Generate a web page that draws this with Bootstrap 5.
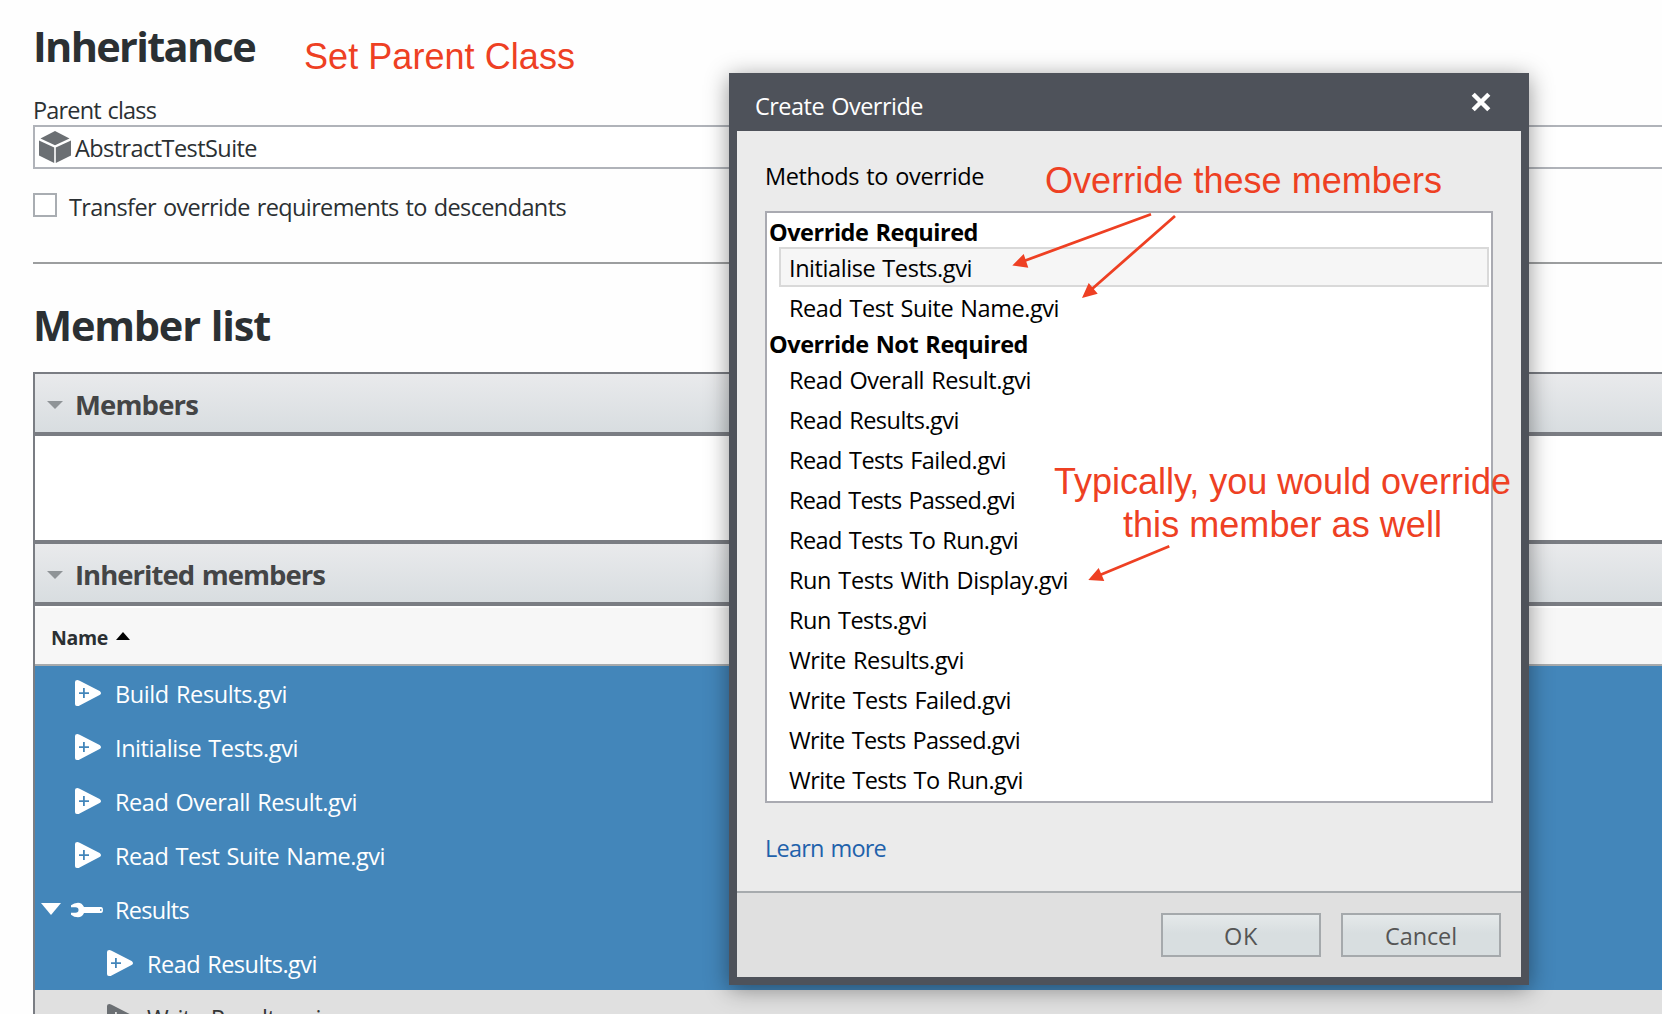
<!DOCTYPE html>
<html lang="en">
<head>
<meta charset="utf-8">
<title>Create Override</title>
<link href="https://cdn.jsdelivr.net/npm/bootstrap@5.3.0/dist/css/bootstrap.min.css" rel="stylesheet">
<style>
body{font-family:"Open Sans","Noto Sans",sans-serif;font-size:23.5px;line-height:1.3;color:#2b3033;background:#fefefe;height:1014px;overflow:hidden;white-space:nowrap;word-spacing:1.5px}
svg{display:block;flex:none}
.page-pane{padding:21px 0 0 33px;height:1014px;overflow:hidden}
.page-title{font-size:41.5px;line-height:50px;font-weight:700;color:#2b3033;margin:0}
.field-label{line-height:34px;height:32px;margin-top:22px}
.class-field{height:44px;border:2px solid #b0b3b9;border-right:0;background:#fff;padding:3px 0 0 4px}
.class-field svg{margin-top:-3px}
.class-name{margin-left:4px}
.transfer-row{height:24px;margin-top:24px}
.tick-box{width:24px;height:24px;border:2px solid #a9adb2;background:#fff;margin-right:12px}
.divider{height:2px;background:#9c9e9f;margin-top:45px}
.list-title{margin-top:36px}
.member-table{border-left:2px solid #7a7d83;border-top:2px solid #7a7d83;margin-top:22px;background:#fff}
.section-head{height:62px;border-bottom:4px solid #7a7d83;background:linear-gradient(#e9eaec,#d8dde0);font-size:27.5px;font-weight:700;color:#444546;padding:4px 0 0 12px}
.section-head svg{margin:0 12px 0 0}
.section-blank{height:108px;border-bottom:4px solid #7a7d83}
.name-head{height:60px;border-top:2px solid #fff;border-bottom:2px solid #a7aaac;background:#f7f7f7;font-size:19.5px;font-weight:700;padding:4px 0 0 16px}
.name-head svg{margin:-4px 0 0 8px}
.tree-item{height:54px;background:#4386ba;color:#fff;padding:3px 0 0 40px}
.tree-item svg{margin-top:-4px}
.tree-item .lbl{margin-left:14px}
.tree-parent{padding-left:6px}
.tree-parent .wrench{margin:-1px 0 0 10px}
.tree-parent .lbl{margin-left:12px}
.tree-child{padding-left:72px}
.tree-plain{background:#e0e0e0;color:#333637}
.dlg{left:729px;top:73px;width:800px;height:912px;background:#ebebeb;border:8px solid #4e525a;border-top:0;box-shadow:0 4px 22px rgba(0,0,0,.42);color:#000}
.dlg-title{height:58px;background:#4e525a;color:#fff;padding:8px 30px 0 18px}
.dlg-title svg{margin-top:-9px}
.dlg-main{height:760px;padding:29px 28px 0}
.dlg-main .intro{line-height:33px;height:32px}
.method-list{height:592px;margin-top:19px;border:2px solid #a9aab1;background:#fff;padding:2px 2px 0}
.group-name{height:32px;line-height:32px;padding-top:1px;font-weight:700}
.method{height:40px;line-height:40px;padding:1px 0 0 10px;margin-left:10px}
.method.sel{border:2px solid #d9d9d9;background:#f6f6f6;line-height:37px;padding:1px 0 0 8px}
.learn{display:inline-block;line-height:32px;margin-top:29px;color:#1f62ab;text-decoration:none}
.dlg-foot{height:86px;border-top:2px solid #a7abae;background:#e0e0e0;padding:0 20px 0 0;gap:20px}
.dlg-btn{width:160px;height:44px;border:2px solid #a5a9ac;border-radius:0;background:linear-gradient(#e5e9ea,#d8dee0 45%,#d8dee0);color:#555;font-size:23.5px;line-height:40px;padding:1px 0 0}
.note{font-family:"Liberation Sans",Arial,sans-serif;font-size:36px;line-height:43px;color:#ee4023;text-align:center;word-spacing:0}
.note-parent{left:304px;top:35px}
.note-these{left:1045px;top:159px}
.note-typical{left:1054px;top:460px}
.arrows{left:0;top:0;pointer-events:none}
</style>
</head>
<body>
<svg width="0" height="0" class="position-absolute">
  <symbol id="vi" viewBox="0 0 26 26"><path fill="currentColor" fill-rule="evenodd" d="M0 2Q0 0 2.4 0Q3.2 0 4.6.8L24.6 11Q26 12 26 13.2Q26 14.2 24.6 15L4.6 25.4Q3 26.300 1.800 26Q0 26 0 24ZM8 8v4.200H4v1.700h4v4.200h1.800v-4.200h4.200v-1.700H9.800V8Z"/></symbol>
</svg>
<main class="page-pane">
  <h1 class="page-title"><span data-w="222">Inheritance</span></h1>
  <div class="field-label"><span data-w="123">Parent class</span></div>
  <div class="class-field d-flex align-items-center">
    <svg width="32" height="32" viewBox="0 0 32 32" fill="#6b6f73"><path d="M16 0 30.500 7.500 16 14.300 1.500 7.500Z"/><path d="M0 9.500 15.200 16.500V32L0 24.500Z"/><path d="M32 9.500 16.800 16.500V32L32 24.500Z"/></svg>
    <span class="class-name" data-w="182">AbstractTestSuite</span>
  </div>
  <div class="transfer-row d-flex align-items-center"><span class="tick-box"></span><span data-w="497" class="pt-1">Transfer override requirements to descendants</span></div>
  <div class="divider"></div>
  <h1 class="page-title list-title"><span data-w="237">Member list</span></h1>
  <section class="member-table">
    <div class="section-head d-flex align-items-center"><svg width="16" height="8"><path d="M0 0H16L8 8Z" fill="#8f9497"/></svg><span data-w="123">Members</span></div>
    <div class="section-blank"></div>
    <div class="section-head d-flex align-items-center"><svg width="16" height="8"><path d="M0 0H16L8 8Z" fill="#8f9497"/></svg><span data-w="250">Inherited members</span></div>
    <div class="name-head d-flex align-items-center"><span data-w="57">Name</span><svg width="14" height="8"><path d="M0 8H14L7 0Z" fill="#000"/></svg></div>
    <div class="tree-item d-flex align-items-center"><svg width="26" height="26"><use href="#vi"/></svg><span class="lbl" data-w="172">Build Results.gvi</span></div>
    <div class="tree-item d-flex align-items-center"><svg width="26" height="26"><use href="#vi"/></svg><span class="lbl" data-w="183">Initialise Tests.gvi</span></div>
    <div class="tree-item d-flex align-items-center"><svg width="26" height="26"><use href="#vi"/></svg><span class="lbl" data-w="242">Read Overall Result.gvi</span></div>
    <div class="tree-item d-flex align-items-center"><svg width="26" height="26"><use href="#vi"/></svg><span class="lbl" data-w="270">Read Test Suite Name.gvi</span></div>
    <div class="tree-item tree-parent d-flex align-items-center"><svg width="20" height="12"><path d="M0 0H20L10 12Z" fill="#fff"/></svg><svg class="wrench" width="32" height="16" viewBox="0 0 32 16"><path fill="#fff" fill-rule="evenodd" d="M0 3.200Q3 .7 7 .7Q11 .7 13 5H30Q32 5 32 8Q32 11 30 11H13Q11 15.300 7 15.300Q3 15.300 0 12.800V10.800H4.500Q7.500 10.800 7.500 8Q7.500 5.200 4.500 5.200H0ZM29 7.200v1.600h1.500V7.200Z"/></svg><span class="lbl" data-w="74">Results</span></div>
    <div class="tree-item tree-child d-flex align-items-center"><svg width="26" height="26"><use href="#vi"/></svg><span class="lbl" data-w="170">Read Results.gvi</span></div>
    <div class="tree-item tree-child tree-plain d-flex align-items-center"><svg width="26" height="26" color="#6b6f73"><use href="#vi"/></svg><span class="lbl" data-w="174">Write Results.gvi</span></div>
  </section>
</main>

<div class="dlg position-absolute" role="dialog">
  <div class="dlg-title d-flex align-items-center justify-content-between"><span data-w="168">Create Override</span>
    <svg width="20" height="20"><path d="M2.200 2.200 17.800 17.800M17.800 2.200 2.200 17.800" stroke="#fff" stroke-width="4.400"/></svg></div>
  <div class="dlg-main">
    <div class="intro"><span data-w="219">Methods to override</span></div>
    <div class="method-list">
      <div class="group-name"><span data-w="209">Override Required</span></div>
      <div class="method sel"><span data-w="183">Initialise Tests.gvi</span></div>
      <div class="method"><span data-w="270">Read Test Suite Name.gvi</span></div>
      <div class="group-name"><span data-w="259">Override Not Required</span></div>
      <div class="method"><span data-w="242">Read Overall Result.gvi</span></div>
      <div class="method"><span data-w="170">Read Results.gvi</span></div>
      <div class="method"><span data-w="217">Read Tests Failed.gvi</span></div>
      <div class="method"><span data-w="226">Read Tests Passed.gvi</span></div>
      <div class="method"><span data-w="229">Read Tests To Run.gvi</span></div>
      <div class="method"><span data-w="279">Run Tests With Display.gvi</span></div>
      <div class="method"><span data-w="138">Run Tests.gvi</span></div>
      <div class="method"><span data-w="175">Write Results.gvi</span></div>
      <div class="method"><span data-w="222">Write Tests Failed.gvi</span></div>
      <div class="method"><span data-w="231">Write Tests Passed.gvi</span></div>
      <div class="method"><span data-w="234">Write Tests To Run.gvi</span></div>
    </div>
    <a class="learn" href="#"><span data-w="121">Learn more</span></a>
  </div>
  <div class="dlg-foot d-flex align-items-center justify-content-end">
    <button class="btn dlg-btn" type="button"><span data-w="34">OK</span></button>
    <button class="btn dlg-btn" type="button"><span data-w="72">Cancel</span></button>
  </div>
</div>

<div class="note note-parent position-absolute"><span data-w="271">Set Parent Class</span></div>
<div class="note note-these position-absolute"><span data-w="397">Override these members</span></div>
<div class="note note-typical position-absolute"><span data-w="457">Typically, you would override</span><br><span data-w="319">this member as well</span></div>
<svg class="arrows position-absolute" width="1662" height="1014" fill="#ee4023" stroke="#ee4023">
  <path d="M1151 214.300 1024 261M1175 216 1092 289M1169.300 546.300 1100 575" stroke-width="2.800" fill="none"/>
  <path stroke="none" d="M1012.300 265.600 1023.700 254 1028.300 267.700ZM1082 298 1088.700 283 1097.700 293.700ZM1088.300 580 1098.700 568 1104.300 581Z"/>
</svg>
<script src="https://cdn.jsdelivr.net/npm/bootstrap@5.3.0/dist/js/bootstrap.bundle.min.js"></script>
<script>
// Track each label so it spans its declared width
document.querySelectorAll('[data-w]').forEach(function (el) {
  var n = el.textContent.length;
  el.style.letterSpacing = ((+el.dataset.w - el.getBoundingClientRect().width) / n).toFixed(3) + 'px';
});
</script>
</body>
</html>
